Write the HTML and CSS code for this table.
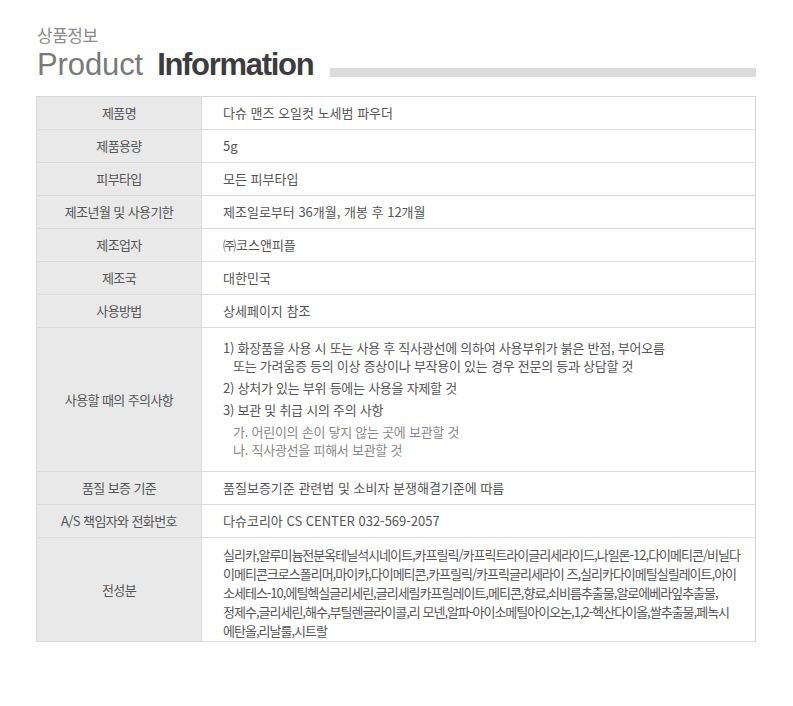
FILE: index.html
```html
<!DOCTYPE html>
<html lang="ko">
<head>
    <meta charset="UTF-8">
    <meta name="viewport" content="width=device-width, initial-scale=1.0">
    <title>상품정보 | Product Information</title>
    <link rel="stylesheet" href="styles.css">
</head>
<body>
    <div class="info-wrap">
        <div class="info-head">
            <p class="head-ko">상품정보</p>
            <div class="head-en">
                <span class="en-light">Product</span>
                <span class="en-bold">Information</span>
                <span class="head-bar"></span>
            </div>
        </div>

        <table class="info-table">
            <tr class="row-first">
                <th>제품명</th>
                <td>다슈 맨즈 오일컷 노세범 파우더</td>
            </tr>
            <tr>
                <th>제품용량</th>
                <td>5g</td>
            </tr>
            <tr>
                <th>피부타입</th>
                <td>모든 피부타입</td>
            </tr>
            <tr>
                <th>제조년월 및 사용기한</th>
                <td>제조일로부터 36개월, 개봉 후 12개월</td>
            </tr>
            <tr>
                <th>제조업자</th>
                <td>㈜코스앤피플</td>
            </tr>
            <tr>
                <th>제조국</th>
                <td>대한민국</td>
            </tr>
            <tr>
                <th>사용방법</th>
                <td>상세페이지 참조</td>
            </tr>
            <tr class="row-notes">
                <th>사용할 때의 주의사항</th>
                <td>
                    <div class="note">1) 화장품을 사용 시 또는 사용 후 직사광선에 의하여 사용부위가 붉은 반점, 부어오름<br><span class="indent">또는 가려움증 등의 이상 증상이나 부작용이 있는 경우 전문의 등과 상담할 것</span></div>
                    <div class="note">2) 상처가 있는 부위 등에는 사용을 자제할 것</div>
                    <div class="note">3) 보관 및 취급 시의 주의 사항</div>
                    <div class="sub-note">가. 어린이의 손이 닿지 않는 곳에 보관할 것<br>나. 직사광선을 피해서 보관할 것</div>
                </td>
            </tr>
            <tr>
                <th>품질 보증 기준</th>
                <td>품질보증기준 관련법 및 소비자 분쟁해결기준에 따름</td>
            </tr>
            <tr>
                <th>A/S 책임자와 전화번호</th>
                <td>다슈코리아 CS CENTER 032-569-2057</td>
            </tr>
            <tr class="row-ingredients">
                <th>전성분</th>
                <td>
                    <div class="ingredients">
                        <span>실리카,알루미늄전분옥테닐석시네이트,카프릴릭/카프릭트라이글리세라이드,나일론-12,다이메티콘/비닐다</span>
                        <span>이메티콘크로스폴리머,마이카,다이메티콘,카프릴릭/카프릭글리세라이 즈,실리카다이메틸실릴레이트,아이</span>
                        <span>소세테스-10,에틸헥실글리세린,글리세릴카프릴레이트,메티콘,향료,쇠비름추출물,알로에베라잎추출물,</span>
                        <span>정제수,글리세린,해수,부틸렌글라이콜,리 모넨,알파-아이소메틸아이오논,1,2-헥산다이올,쌀추출물,페녹시</span>
                        <span>에탄올,리날룰,시트랄</span>
                    </div>
                </td>
            </tr>
        </table>
    </div>
</body>
</html>
```

FILE: styles.css
```css
/* Global Styles */
body {
    margin: 0;
    padding: 0;
    background-color: #fff;
    color: #555;
    font-family: "Noto Sans CJK KR", "Liberation Sans", sans-serif;
}

.info-wrap {
    width: 720px;
    padding: 25px 0 0 36px;
}

/* Header */
.head-ko {
    margin: 0;
    padding-left: 1px;
    font-size: 17px;
    line-height: 20px;
    color: #8a8a8a;
    letter-spacing: -0.5px;
}

.head-en {
    display: flex;
    align-items: flex-end;
    height: 37px;
    padding-left: 1px;
}

.en-light,
.en-bold {
    font-family: "Liberation Sans", Arial, sans-serif;
    font-size: 31px;
    line-height: 34px;
}

.en-light {
    color: #7a7a7a;
    letter-spacing: -0.1px;
}

.en-bold {
    margin-left: 14px;
    font-weight: bold;
    color: #3c3c3c;
    letter-spacing: -1.3px;
}

.head-bar {
    flex: 1;
    height: 9px;
    margin: 0 0 5px 17px;
    background-color: #dcdcdc;
}

/* Table */
.info-table {
    width: 720px;
    margin-top: 14px;
    border-collapse: collapse;
    border: 1px solid #d6d6d6;
    font-size: 13px;
}

.info-table th,
.info-table td {
    height: 32px;
    padding: 0;
    border-bottom: 1px solid #dcdcdc;
    line-height: 18px;
}

.info-table th {
    width: 164px;
    background-color: #e9e9e9;
    border-right: 1px solid #dcdcdc;
    font-weight: normal;
    color: #555;
    letter-spacing: -0.6px;
    text-align: center;
}

.info-table td {
    padding-left: 21px;
    color: #555;
    letter-spacing: 0;
    text-align: left;
}

/* Notes */
.row-notes td {
    padding-top: 11px;
    padding-bottom: 12px;
    letter-spacing: -0.25px;
}

.note {
    margin-bottom: 4px;
    line-height: 18px;
}

.indent {
    padding-left: 10px;
}

.sub-note {
    padding-left: 10px;
    color: #888;
    line-height: 18px;
}

/* Ingredients */
.row-ingredients td {
    padding-top: 7px;
    padding-bottom: 1px;
}

.ingredients {
    letter-spacing: -1px;
    white-space: nowrap;
}

.ingredients span {
    display: block;
    height: 19px;
    line-height: 19px;
}
```
